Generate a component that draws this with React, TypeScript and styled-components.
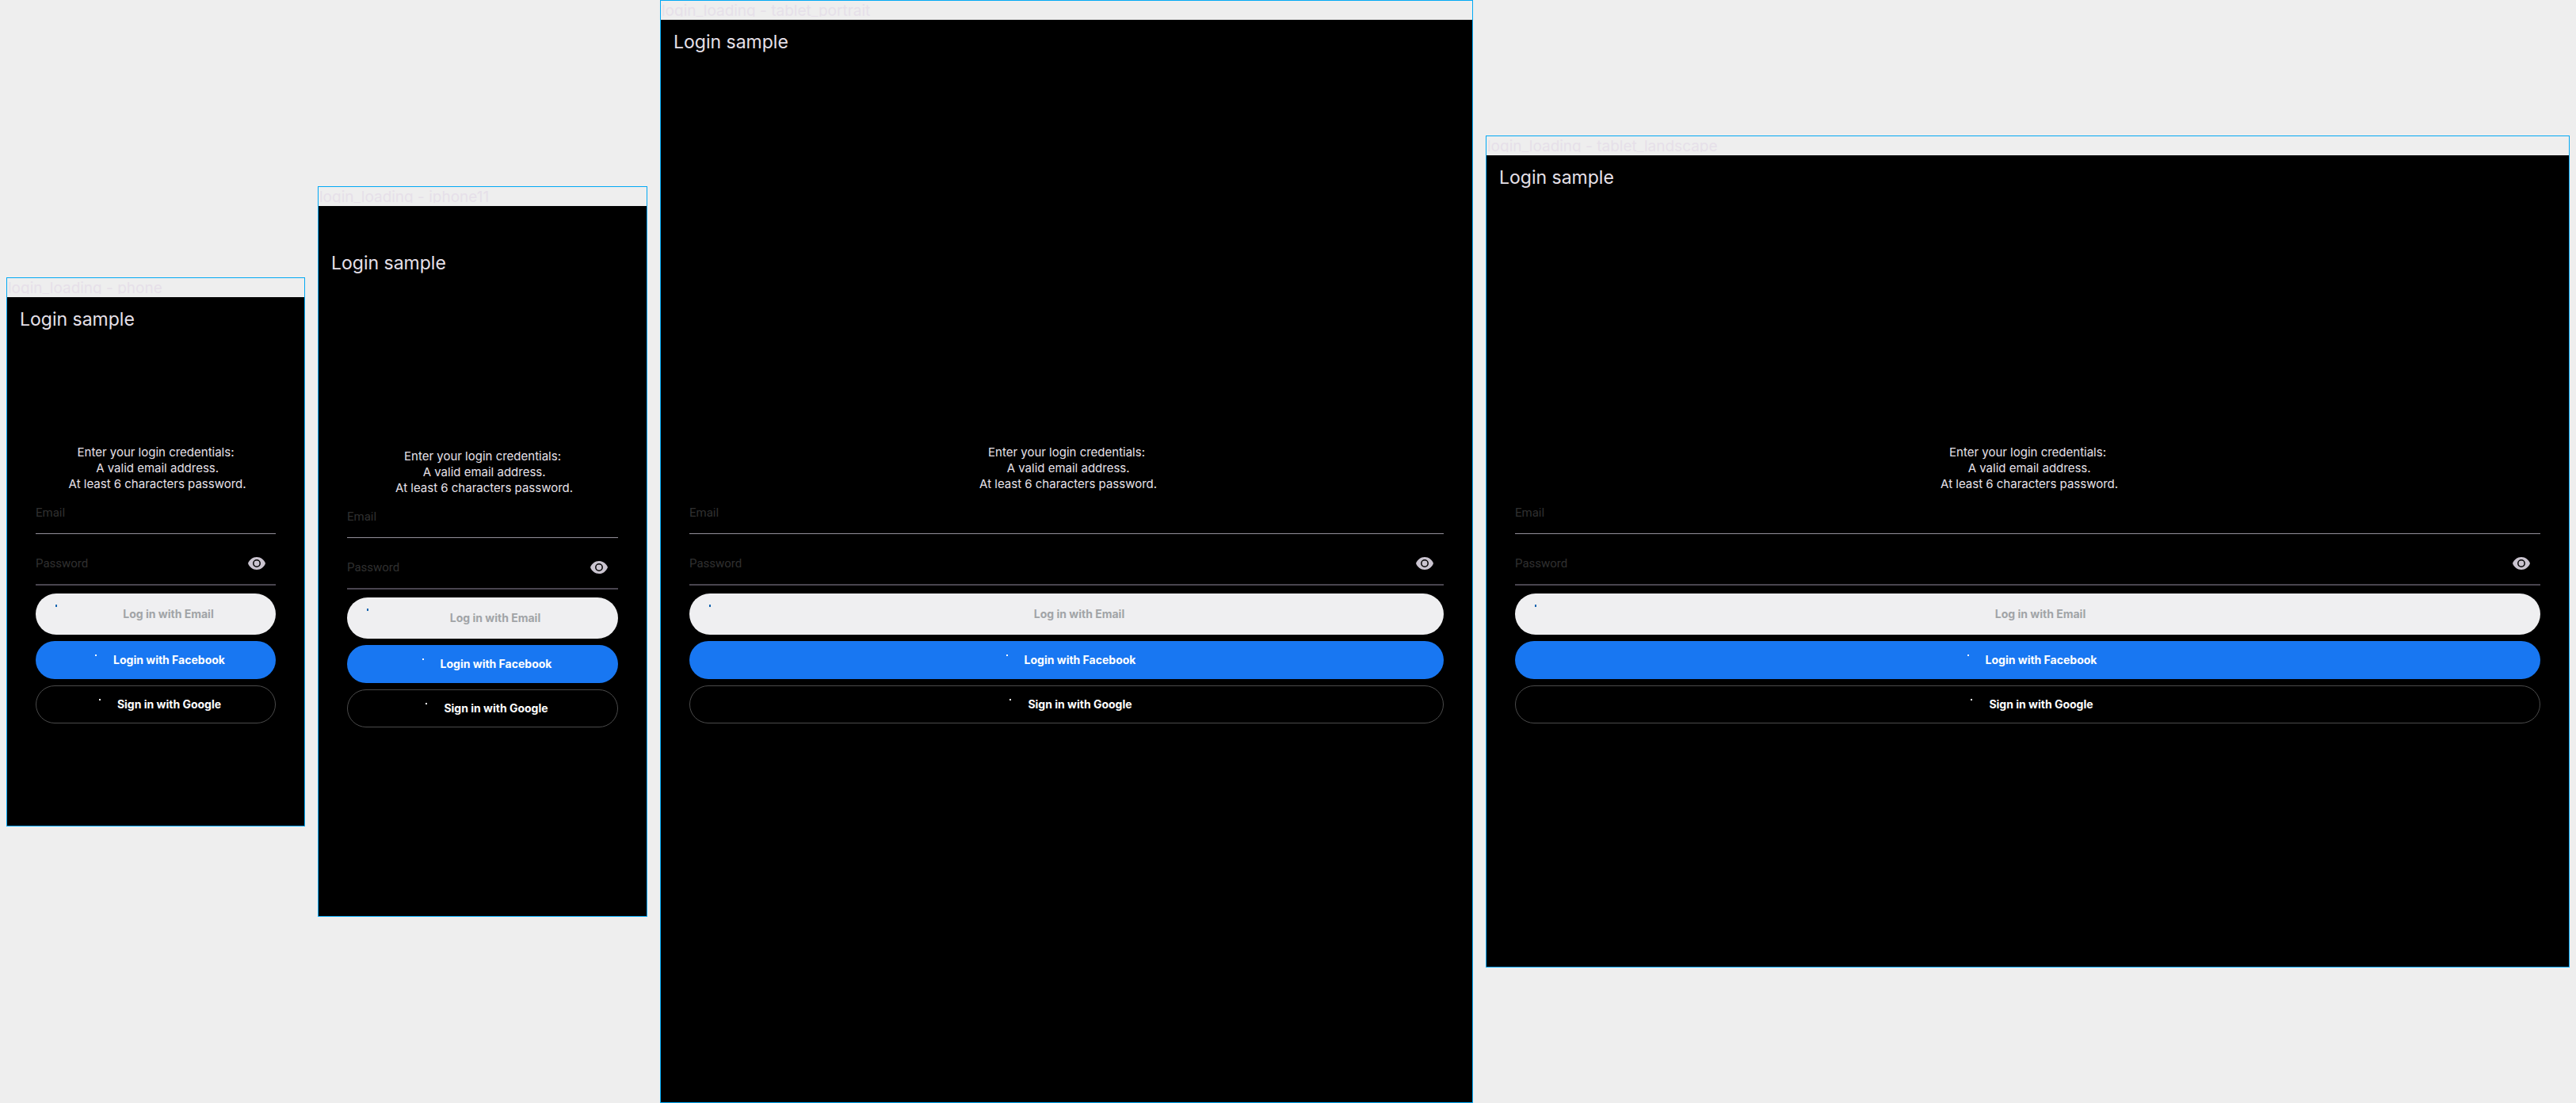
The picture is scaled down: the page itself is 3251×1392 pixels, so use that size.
import React from "react";
import styled, { createGlobalStyle } from "styled-components";

const GlobalStyle = createGlobalStyle`
  *, *::before, *::after { box-sizing: border-box; }
  body {
    margin: 0;
    background: #eeeeee;
    font-family: Inter, "Noto Sans", sans-serif;
  }
`;

const Board = styled.main`
  display: grid;
  grid-template-columns: 377fr 416fr 1026fr 1368fr;
  gap: 16px;
  align-items: center;
  min-height: 100vh;
  padding: 0 8px;
`;

const Frame = styled.section`
  display: flex;
  flex-direction: column;
  min-width: 0;
  border: 1px solid #03a9f4;
`;

const FrameName = styled.h2`
  height: 20px;
  margin: 0 0 4px;
  padding-left: 1px;
  overflow: hidden;
  color: #e6e0e9;
  font-size: 19px;
  font-weight: 400;
  line-height: 26px;
  white-space: nowrap;
`;

const Screen = styled.div<{ $ratio: string; $notch: boolean }>`
  display: flex;
  flex-direction: column;
  aspect-ratio: ${(p) => p.$ratio};
  padding: ${(p) => (p.$notch ? "44px 0 34px" : "0")};
  background: #000000;
`;

const AppBar = styled.header`
  display: flex;
  align-items: center;
  height: 56px;
  padding: 0 16px;
`;

const Title = styled.h1`
  margin: 0;
  color: #e6e0e9;
  font-size: 23px;
  font-weight: 400;
  line-height: 28px;
`;

const Form = styled.form`
  display: flex;
  flex: 1;
  flex-direction: column;
  justify-content: center;
  padding: 0 36px;
`;

const Intro = styled.p`
  margin: 0;
  padding-top: 2px;
  color: #e6e0e9;
  font-size: 15px;
  font-weight: 400;
  line-height: 20px;
  text-align: center;
  white-space: pre-wrap;
`;

const Fields = styled.div`
  display: flex;
  flex-direction: column;
  gap: 11px;
  margin-bottom: 10px;
`;

const Field = styled.div<{ $line: string }>`
  display: flex;
  border-bottom: ${(p) => p.$line};
`;

const Input = styled.input`
  flex: 1;
  min-width: 0;
  height: 52px;
  padding: 0;
  border: 0;
  outline: 0;
  background: transparent;
  color: #e6e0e9;
  font-family: Roboto, sans-serif;
  font-size: 15px;

  &::placeholder {
    color: #303030;
    opacity: 1;
  }
`;

const RevealButton = styled.button`
  display: flex;
  align-items: center;
  justify-content: center;
  width: 48px;
  padding: 0;
  border: 0;
  background: transparent;
  color: #cac4d0;
`;

const Actions = styled.div`
  display: flex;
  flex-direction: column;
  gap: 8px;
`;

const Button = styled.button`
  display: flex;
  align-items: center;
  justify-content: center;
  gap: 10px;
  height: 48px;
  padding: 0 14px;
  border: 0;
  border-radius: 26px;
  color: #ffffff;
  font-family: inherit;
  font-size: 14px;
  font-weight: 700;
  line-height: 20px;
`;

const EmailButton = styled(Button)`
  gap: 8px;
  height: 52px;
  background: #efeff1;
  color: #a1a4a7;
`;

const FacebookButton = styled(Button)`
  background: #1877f2;
`;

const GoogleButton = styled(Button)`
  border: 1px solid #4a4a4a;
  background: #000000;
`;

const ButtonText = styled.span<{ $fill?: boolean }>`
  flex: ${(p) => (p.$fill ? "1" : "none")};
  text-align: center;
`;

const Eye = () => (
  <svg width="24" height="24" viewBox="0 0 24 24" aria-hidden="true">
    <path
      fill="currentColor"
      d="M12 4C7 4 2.73 7.4 1 12c1.73 4.6 6 8 11 8s9.27-3.4 11-8c-1.73-4.6-6-8-11-8z"
    />
    <circle cx="12" cy="12" r="4.2" fill="none" stroke="#000000" strokeWidth="1.5" />
  </svg>
);

const Speck = ({ y, height, color }: { y: number; height: number; color: string }) => (
  <svg width="24" height="24" viewBox="0 0 24 24" aria-hidden="true">
    <rect x="11" y={y} width="2" height={height} fill={color} />
  </svg>
);

const introText =
  "Enter your login credentials:\n A valid email address.\n At least 6 characters password.";

const devices = [
  { name: "phone", ratio: "375 / 667", notch: false },
  { name: "iphone11", ratio: "414 / 896", notch: true },
  { name: "tablet_portrait", ratio: "1024 / 1366", notch: false },
  { name: "tablet_landscape", ratio: "1366 / 1024", notch: false },
];

const LoginForm = () => (
  <Form onSubmit={(e) => e.preventDefault()}>
    <Intro>{introText}</Intro>
    <Fields>
      <Field $line="1px solid #938f99">
        <Input type="email" placeholder="Email" aria-label="Email" />
      </Field>
      <Field $line="2px solid #49454f">
        <Input type="password" placeholder="Password" aria-label="Password" />
        <RevealButton type="button" aria-label="Show password">
          <Eye />
        </RevealButton>
      </Field>
    </Fields>
    <Actions>
      <EmailButton type="submit" disabled>
        <Speck y={0} height={3} color="#1565b0" />
        <ButtonText $fill>Log in with Email</ButtonText>
      </EmailButton>
      <FacebookButton type="button">
        <Speck y={5} height={2} color="#ffffff" />
        <ButtonText>Login with Facebook</ButtonText>
      </FacebookButton>
      <GoogleButton type="button">
        <Speck y={5} height={2} color="#ffffff" />
        <ButtonText>Sign in with Google</ButtonText>
      </GoogleButton>
    </Actions>
  </Form>
);

export default function App() {
  return (
    <>
      <GlobalStyle />
      <Board>
        {devices.map((device) => (
          <Frame key={device.name}>
            <FrameName>login_loading - {device.name}</FrameName>
            <Screen $ratio={device.ratio} $notch={device.notch}>
              <AppBar>
                <Title>Login sample</Title>
              </AppBar>
              <LoginForm />
            </Screen>
          </Frame>
        ))}
      </Board>
    </>
  );
}
